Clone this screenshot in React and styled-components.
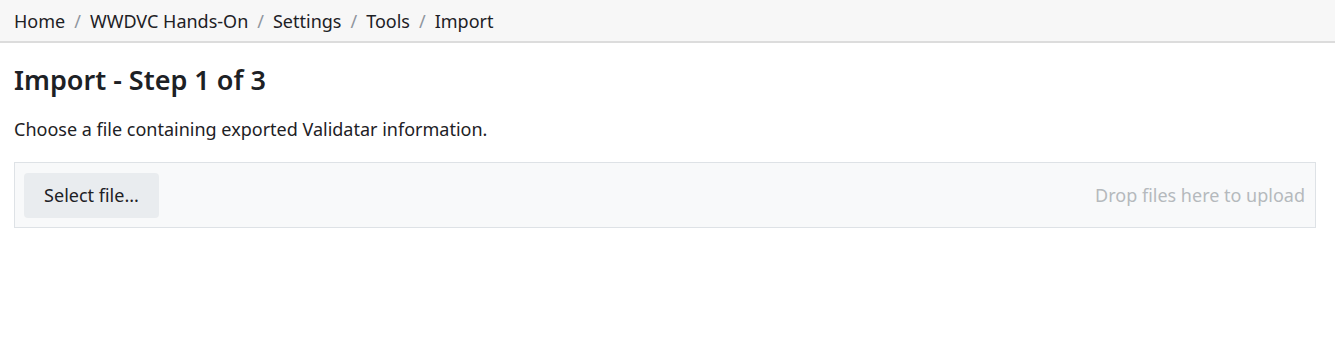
import styled, { createGlobalStyle } from "styled-components";

const GlobalStyle = createGlobalStyle`
  body {
    margin: 0;
    background: #fff;
    font-family: "Noto Sans", "Open Sans", sans-serif;
    color: #1d2125;
  }
`;

const Crumbs = styled.nav`
  display: flex;
  align-items: center;
  height: 41px;
  padding: 0 14px;
  background: #f7f7f7;
  border-bottom: 2px solid #dcdcdc;
  font-size: 18px;
`;

const Crumb = styled.span`
  color: #1d2125;
`;

const Sep = styled.span`
  color: #8f959e;
  padding: 0 9px;
`;

const Main = styled.main`
  padding: 0 14px;
`;

const Title = styled.h2`
  margin: 20px 0 0;
  font-size: 27px;
  font-weight: 600;
  line-height: 34px;
`;

const Intro = styled.p`
  margin: 20px 0 0;
  font-size: 18px;
  line-height: 24px;
`;

const Picker = styled.div`
  display: flex;
  align-items: center;
  justify-content: space-between;
  margin: 21px 5px 0 0;
  padding: 0 10px 0 9px;
  height: 66px;
  box-sizing: border-box;
  background: #f8f9fa;
  border: 1px solid #dee2e6;
`;

const Button = styled.button`
  height: 45px;
  width: 135px;
  padding: 0;
  border: none;
  border-radius: 4px;
  background: #e9ecef;
  color: #1d2125;
  font-family: inherit;
  font-size: 18px;
`;

const DropHint = styled.span`
  color: #b5b9bd;
  font-size: 18px;
`;

const trail = ["Home", "WWDVC Hands-On", "Settings", "Tools", "Import"];

export default function App() {
  return (
    <>
      <GlobalStyle />
      <Crumbs>
        {trail.map((item, i) => (
          <span key={item}>
            {i > 0 && <Sep>/</Sep>}
            <Crumb>{item}</Crumb>
          </span>
        ))}
      </Crumbs>
      <Main>
        <Title>Import - Step 1 of 3</Title>
        <Intro>Choose a file containing exported Validatar information.</Intro>
        <Picker>
          <Button>Select file...</Button>
          <DropHint>Drop files here to upload</DropHint>
        </Picker>
      </Main>
    </>
  );
}
